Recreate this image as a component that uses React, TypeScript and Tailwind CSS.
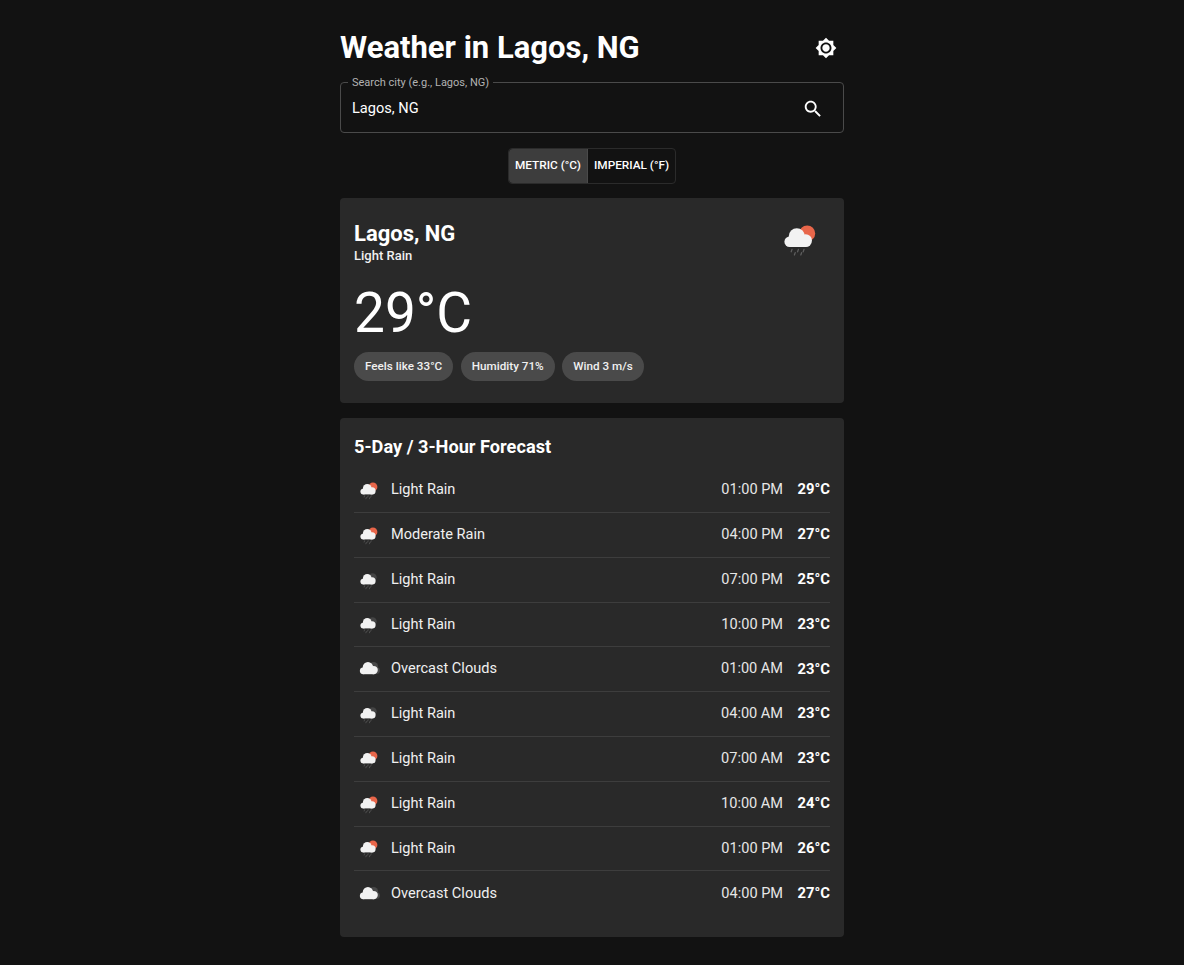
const rows = [
  { k: "sun", d: "Light Rain", t: "01:00 PM", v: "29°C" },
  { k: "sun", d: "Moderate Rain", t: "04:00 PM", v: "27°C" },
  { k: "moon", d: "Light Rain", t: "07:00 PM", v: "25°C" },
  { k: "moon", d: "Light Rain", t: "10:00 PM", v: "23°C" },
  { k: "over", d: "Overcast Clouds", t: "01:00 AM", v: "23°C" },
  { k: "moon", d: "Light Rain", t: "04:00 AM", v: "23°C" },
  { k: "sun", d: "Light Rain", t: "07:00 AM", v: "23°C" },
  { k: "sun", d: "Light Rain", t: "10:00 AM", v: "24°C" },
  { k: "sun", d: "Light Rain", t: "01:00 PM", v: "26°C" },
  { k: "over", d: "Overcast Clouds", t: "04:00 PM", v: "27°C" },
];

function WeatherIcon({ kind, size }: { kind: string; size: number }) {
  const over = kind === "over";
  return (
    <svg width={size} height={size} viewBox="0 0 50 50" className="shrink-0">
      {kind === "sun" && <circle cx="34" cy="18" r="10" fill="#e8664a" />}
      {kind === "moon" && <circle cx="33" cy="19" r="9.5" fill="#444444" />}
      {over && (
        <g fill="#484848">
          <circle cx="32" cy="20" r="8.5" />
          <circle cx="37.5" cy="28" r="6.5" />
        </g>
      )}
      <g fill="#f2f2f2">
        <circle cx="12" cy="28.5" r="6.5" />
        <circle cx="21" cy="21.5" r="10" />
        <circle cx="32" cy="27" r="8" />
        <rect x="12" y="26" width="21" height="9" />
      </g>
      {!over && (
        <g stroke="#5f5f5f" strokeWidth="1.6" strokeLinecap="round">
          <path d="M15 38l-1 3M23 38l-1 3M30 38l-1 3M19 42l-1 3M27 42l-1 3" />
        </g>
      )}
    </svg>
  );
}

export default function App() {
  return (
    <div className="min-h-[965px] bg-[#121212] text-white font-['Roboto',sans-serif]">
      <div className="mx-auto flex w-[504px] flex-col pt-4">
        <header className="flex h-[64px] items-center justify-between">
          <h1 className="text-[31px] leading-[1.2] font-bold">Weather in Lagos, NG</h1>
          <svg width="22" height="22" viewBox="0 0 24 24" fill="#fff" className="mr-[7.5px]">
            <path d="M20 8.69V4h-4.69L12 .69 8.69 4H4v4.69L.69 12 4 15.31V20h4.69L12 23.31 15.31 20H20v-4.69L23.31 12 20 8.69zM12 18c-3.31 0-6-2.69-6-6s2.69-6 6-6 6 2.69 6 6-2.69 6-6 6zm0-10c-2.21 0-4 1.79-4 4s1.79 4 4 4 4-1.79 4-4-1.79-4-4-4z" />
          </svg>
        </header>

        <fieldset className="mt-[-4px] h-[57px] rounded border border-[#4a4a4a] px-[7px]">
          <legend className="px-[4px] pt-px text-[11px] leading-[12px] text-[#b3b3b3]">Search city (e.g., Lagos, NG)</legend>
          <div className="flex h-[40px] items-center justify-between pl-[4px] pr-[12px]">
            <span className="text-[14.6px]">Lagos, NG</span>
            <svg width="22" height="22" viewBox="0 0 24 24" fill="#fff">
              <path d="M15.5 14h-.79l-.28-.27C15.41 12.59 16 11.11 16 9.5 16 5.91 13.09 3 9.5 3S3 5.91 3 9.5 5.91 16 9.5 16c1.61 0 3.09-.59 4.23-1.57l.27.28v.79l5 4.99L20.49 19l-4.99-5zm-6 0C7.01 14 5 11.99 5 9.5S7.01 5 9.5 5 14 7.01 14 9.5 11.99 14 9.5 14z" />
            </svg>
          </div>
        </fieldset>

        <div className="mt-[15px] flex justify-center">
          <div className="flex h-[36px] rounded border border-[#2b2b2b] text-[11.8px] font-medium">
            <div className="flex w-[79px] items-center justify-center rounded-l bg-[#3d3d3d] border-r border-[#4a4a4a] pb-[1px]">METRIC (°C)</div>
            <div className="flex w-[87px] items-center justify-center pb-[1px]">IMPERIAL (°F)</div>
          </div>
        </div>

        <section className="mt-[14px] flex h-[205px] flex-col rounded bg-[#292929] px-[14px] pt-[23px]">
          <div className="flex items-start justify-between">
            <div>
              <div className="text-[22px] leading-[25px] font-bold">Lagos, NG</div>
              <div className="text-[13px] leading-[20px] font-medium text-[#f0f0f0]">Light Rain</div>
            </div>
            <div className="mr-[10px] mt-[-2px]"><WeatherIcon kind="sun" size={40} /></div>
          </div>
          <div className="mt-[14px] text-[55px] leading-[66px] font-normal">29°C</div>
          <div className="mt-[6px] flex gap-[7.5px]">
            {["Feels like 33°C", "Humidity 71%", "Wind 3 m/s"].map((c) => (
              <span key={c} className="flex h-[29px] items-center rounded-full bg-[#4a4a4a] px-[11px] text-[11.7px] font-medium text-[#f0f0f0]">{c}</span>
            ))}
          </div>
        </section>

        <section className="mt-[15px] flex h-[519px] flex-col rounded bg-[#292929] px-[14px] pt-[16px]">
          <h2 className="text-[18.2px] leading-[26px] font-bold">5-Day / 3-Hour Forecast</h2>
          <ul className="mt-[8.2px]">
            {rows.map((r, i) => (
              <li key={i} className={`flex h-[44.8px] items-center justify-between ${i < 9 ? "border-b border-[#3d3d3d]" : ""}`}>
                <div className="flex items-center">
                  <span className={`flex w-[37px] ${r.k === "over" ? "pl-[3px]" : "pl-[4px]"}`}>
                    <WeatherIcon kind={r.k} size={r.k === "over" ? 26 : 22} />
                  </span>
                  <span className="text-[14.55px] font-normal text-[#f0f0f0]">{r.d}</span>
                </div>
                <div className="flex items-center text-[14.55px]">
                  <span className="text-[#e6e6e6]">{r.t}</span>
                  <span className="ml-[14.5px] pb-[1px] text-[14.8px] font-bold">{r.v}</span>
                </div>
              </li>
            ))}
          </ul>
        </section>
      </div>
    </div>
  );
}
